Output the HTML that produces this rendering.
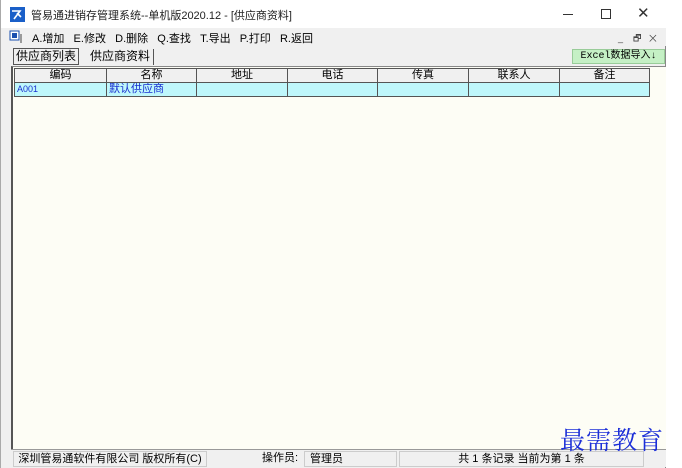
<!DOCTYPE html>
<html><head><meta charset="utf-8"><style>
*{margin:0;padding:0;box-sizing:border-box}
body{width:682px;height:468px;background:#fff;position:relative;overflow:hidden;font-family:"Liberation Sans","Noto Sans CJK SC",sans-serif;font-size:11px;color:#000}
.win{position:absolute;left:0;top:0;width:666px;height:468px;border-right:1px solid #888;border-left:1px solid #aaa;background:#f0f0f0}
.title{position:absolute;left:0;top:0;width:665px;height:28px;background:#fff}
.abs{position:absolute;white-space:nowrap}
.menu{position:absolute;top:28px;left:0;width:665px;height:18px;background:#f0f0f0}
.client{position:absolute;left:10px;top:66px;width:655px;height:383px;background:#fdfdf5;border-left:2px solid #555;border-top:1px solid #888}
.c{position:absolute;border:1px solid #555;height:15px;line-height:13px;font-size:11px;overflow:hidden}
.h{background:#f0f0f0;text-align:center}
.d{background:#bff7fb;top:14px;padding-left:2px}
</style></head><body>
<div class="win">
<div class="title">
<svg class="abs" style="left:9px;top:7px" width="15" height="15"><rect width="15" height="15" fill="#1a5fc8"/><path d="M2 4h8l-6 8M7 6l4 4" stroke="#fff" stroke-width="1.6" fill="none"/></svg>
<div class="abs" style="left:30px;top:7px;font-size:11px;color:#222">管易通进销存管理系统--单机版2020.12 - [供应商资料]</div>
<div class="abs" style="left:562px;top:14px;width:10px;height:1px;background:#333"></div>
<div class="abs" style="left:600px;top:9px;width:10px;height:10px;border:1px solid #333"></div>
<div class="abs" style="left:636px;top:4px;font-size:15px;color:#333">✕</div>
</div>
<div class="menu">
<svg class="abs" style="left:8px;top:2px" width="14" height="14"><rect x="1" y="1" width="9" height="9" fill="#fff" stroke="#1a4fb0"/><rect x="3" y="3" width="5" height="5" fill="#1a4fb0"/><path d="M12 4v9" stroke="#444"/></svg>
<div class="abs" style="left:31px;top:2px;font-size:11px">A.增加&nbsp;&nbsp;&nbsp;E.修改&nbsp;&nbsp;&nbsp;D.删除&nbsp;&nbsp;&nbsp;Q.查找&nbsp;&nbsp;&nbsp;T.导出&nbsp;&nbsp;&nbsp;P.打印&nbsp;&nbsp;&nbsp;R.返回</div>
<div class="abs" style="left:617px;top:3px;font-size:9px;color:#444">_&nbsp;&nbsp;&nbsp;&nbsp;🗗&nbsp;&nbsp;&nbsp;✕</div>
</div>
<div class="abs" style="left:12px;top:48px;height:17px;border:1px solid #555;padding:0 2px;font-size:12px;line-height:15px;background:#f0f0f0">供应商列表</div>
<div class="abs" style="left:86px;top:49px;height:16px;border-right:1px solid #555;padding:0 3px;font-size:12px;line-height:15px">供应商资料</div>
<div class="abs" style="left:571px;top:49px;width:93px;height:15px;background:#c5f0c5;border:1px solid #9c9;font-size:10px;line-height:13px;text-align:center;font-family:'Liberation Mono','Noto Sans CJK SC',monospace">Excel数据导入↓</div>
<div class="client">
<div class="abs" style="left:1px;top:1px;width:640px;height:32px">
<div class="c h" style="left:0;width:93px">编码</div>
<div class="c h" style="left:92px;width:91px">名称</div>
<div class="c h" style="left:182px;width:92px">地址</div>
<div class="c h" style="left:273px;width:91px">电话</div>
<div class="c h" style="left:363px;width:92px">传真</div>
<div class="c h" style="left:454px;width:92px">联系人</div>
<div class="c h" style="left:545px;width:91px">备注</div>
<div class="c d" style="left:0;width:93px;font-size:9px;color:#1a30d0">A001</div>
<div class="c d" style="left:92px;width:91px;color:#1a30d0">默认供应商</div>
<div class="c d" style="left:182px;width:92px"></div>
<div class="c d" style="left:273px;width:91px"></div>
<div class="c d" style="left:363px;width:92px"></div>
<div class="c d" style="left:454px;width:92px"></div>
<div class="c d" style="left:545px;width:91px"></div>
</div>
</div>
<div class="abs" style="left:10px;top:449px;width:655px;height:18px;background:#f0f0f0;border-top:1px solid #999;font-size:11px">
<div class="abs" style="left:2px;top:1px;width:194px;height:16px;border:1px solid #ccc;text-align:center;line-height:15px">深圳管易通软件有限公司 版权所有(C)</div>
<div class="abs" style="left:251px;top:1px;line-height:15px">操作员:</div>
<div class="abs" style="left:293px;top:1px;width:93px;height:16px;border:1px solid #ccc;padding-left:5px;line-height:15px">管理员</div>
<div class="abs" style="left:388px;top:1px;width:245px;height:16px;border:1px solid #ccc;text-align:center;line-height:15px">共 1 条记录 当前为第 1 条</div>
</div>
</div>
<div class="abs" style="left:560px;top:421px;font-size:25px;color:#1c2fd8;font-family:'Noto Serif CJK SC',serif;letter-spacing:1px">最需教育</div>
</body></html>
